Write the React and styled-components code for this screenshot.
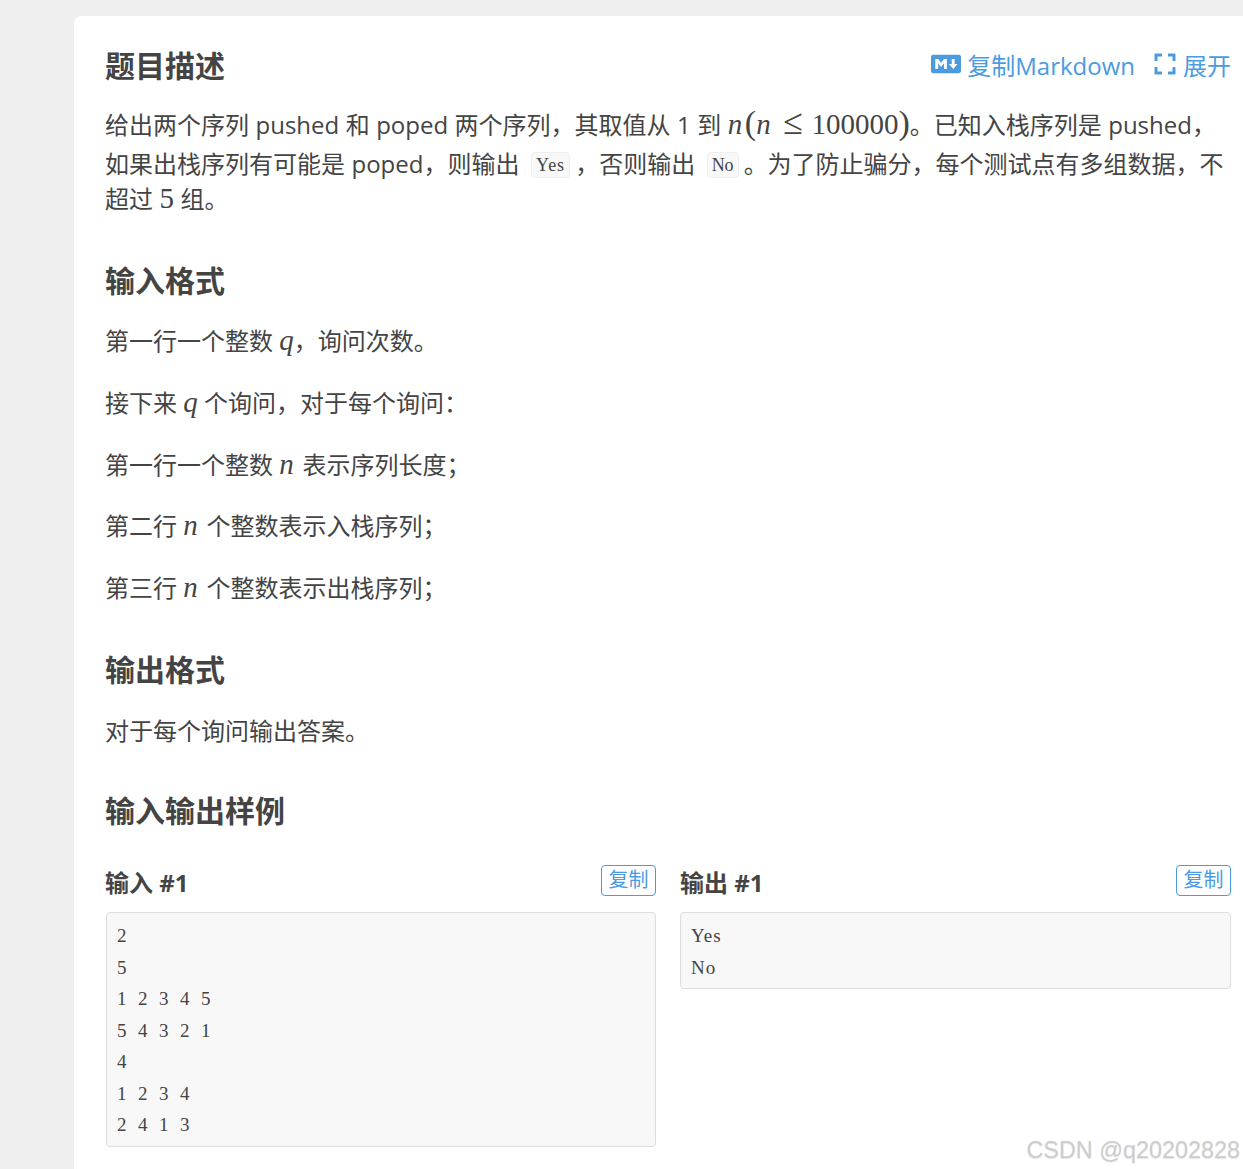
import React from 'react';
import styled, { createGlobalStyle } from 'styled-components';
import { FaMarkdown, FaExpand } from 'react-icons/fa';

const GlobalStyle = createGlobalStyle`
  html, body {
    margin: 0;
    height: 1169px;
    overflow: hidden;
    background: #efefef;
  }
`;

const Page = styled.div`
  height: 1153px;
  padding: 16px 0 0 74px;
  overflow: hidden;
  font-family: "Open Sans", "Noto Sans CJK SC", sans-serif;
  color: #444;
`;

const Card = styled.main`
  background: #fff;
  border-radius: 8px 0 0 0;
  padding: 24px 12px 24px 32px;
  height: 1200px;
`;

const HeadRow = styled.div`
  display: flex;
  align-items: center;
  justify-content: space-between;
`;

const Heading = styled.h2`
  margin: ${p => p.$top || 0}px 0 ${p => p.$bottom ?? 16}px -1px;
  font-size: 30px;
  line-height: 52px;
  font-weight: 700;
  color: #444;
`;

const Actions = styled.div`
  display: flex;
  align-items: center;
  gap: 18px;
  padding-bottom: 4px;
`;

const ActionLink = styled.a`
  display: inline-flex;
  align-items: center;
  gap: 6px;
  font-size: 24px;
  color: #4b9be0;
`;

const Para = styled.p`
  margin: 0 0 24px -1px;
  font-size: 24px;
  line-height: 37.75px;
`;

const IntroPara = styled(Para)`
  margin-top: 12px;
  line-height: 35px;
  word-spacing: 0.25px;
`;

const M = styled.span`
  font-family: "Liberation Serif", serif;
  font-size: 29px;
  line-height: 1;
  font-style: italic;
`;

const MVar = styled(M)`
  letter-spacing: 2.5px;
`;

const MText = styled(M)`
  font-style: normal;
`;

const MParen = styled(MText)`
  font-size: 34px;
`;

const MRel = styled(MText)`
  font-size: 36px;
  margin: 0 8.5px 0 10px;
`;

const Code = styled.code`
  display: inline-block;
  vertical-align: 2px;
  font-family: "Liberation Serif", serif;
  font-size: 18px;
  line-height: 20px;
  letter-spacing: 1px;
  padding: 2px 4px;
  margin: 10px 5px 0;
  background: #f8f8f8;
  border: 1px solid #eee;
  border-radius: 4px;
`;

const ShortCode = styled(Code)`
  letter-spacing: 0;
`;

const Samples = styled.div`
  display: grid;
  grid-template-columns: 550px 551px;
  column-gap: 24px;
  margin-top: 28px;
`;

const SampleHead = styled.div`
  display: flex;
  justify-content: space-between;
  align-items: flex-start;
  height: 47px;
`;

const SampleTitle = styled.h3`
  margin: 0 0 0 ${p => p.$shift}px;
  font-size: 24px;
  line-height: 36px;
  font-weight: 700;
`;

const CopyBtn = styled.button`
  width: 55px;
  height: 31px;
  padding: 0;
  font-family: inherit;
  font-size: 20px;
  line-height: 26px;
  color: #4b9be0;
  background: #fff;
  border: 1px solid #4b9be0;
  border-radius: 4px;
`;

const Pre = styled.pre`
  margin: 0;
  padding: 7.8px 10px 5.2px;
  font-family: "Liberation Serif", serif;
  font-size: 19px;
  letter-spacing: 1px;
  word-spacing: 4.75px;
  line-height: 31.5px;
  color: #444;
  background: #f8f8f8;
  border: 1px solid #ddd;
  border-radius: 4px;
`;

const Watermark = styled.div`
  position: absolute;
  right: 3px;
  top: 1134px;
  font-family: "Liberation Sans", sans-serif;
  font-size: 23.4px;
  line-height: 32px;
  color: #cdcdcd;
  text-shadow: 0 1px 1px #e6e6e6;
`;

const samples = [
  { label: '输入 #1', shift: -1, text: '2\n5\n1 2 3 4 5\n5 4 3 2 1\n4\n1 2 3 4\n2 4 1 3' },
  { label: '输出 #1', shift: 0, text: 'Yes\nNo' }
];

export default function App() {
  return (
    <Page>
      <GlobalStyle />
      <Card>
        <HeadRow>
          <Heading $bottom={0}>题目描述</Heading>
          <Actions>
            <ActionLink><FaMarkdown size={30} />复制Markdown</ActionLink>
            <ActionLink><FaExpand size={24} />展开</ActionLink>
          </Actions>
        </HeadRow>
        <IntroPara>
          给出两个序列 pushed 和 poped 两个序列，其取值从 1 到 <MVar>n</MVar><MParen>(</MParen><MVar>n</MVar><MRel>≤</MRel><MText>100000</MText><MParen>)</MParen>。已知入栈序列是 pushed，如果出栈序列有可能是 poped，则输出 <Code>Yes</Code>，否则输出 <ShortCode>No</ShortCode>。为了防止骗分，每个测试点有多组数据，不超过 <MText>5</MText> 组。
        </IntroPara>
        <Heading $top={39} $bottom={15}>输入格式</Heading>
        <Para>第一行一个整数 <M>q</M>，询问次数。</Para>
        <Para>接下来 <M>q</M> 个询问，对于每个询问：</Para>
        <Para>第一行一个整数 <MVar>n</MVar> 表示序列长度；</Para>
        <Para>第二行 <MVar>n</MVar> 个整数表示入栈序列；</Para>
        <Para>第三行 <MVar>n</MVar> 个整数表示出栈序列；</Para>
        <Heading $top={37}>输出格式</Heading>
        <Para>对于每个询问输出答案。</Para>
        <Heading $top={35}>输入输出样例</Heading>
        <Samples>
          {samples.map(s => (
            <div key={s.label}>
              <SampleHead>
                <SampleTitle $shift={s.shift}>{s.label}</SampleTitle>
                <CopyBtn>复制</CopyBtn>
              </SampleHead>
              <Pre>{s.text}</Pre>
            </div>
          ))}
        </Samples>
      </Card>
      <Watermark>CSDN @q20202828</Watermark>
    </Page>
  );
}
